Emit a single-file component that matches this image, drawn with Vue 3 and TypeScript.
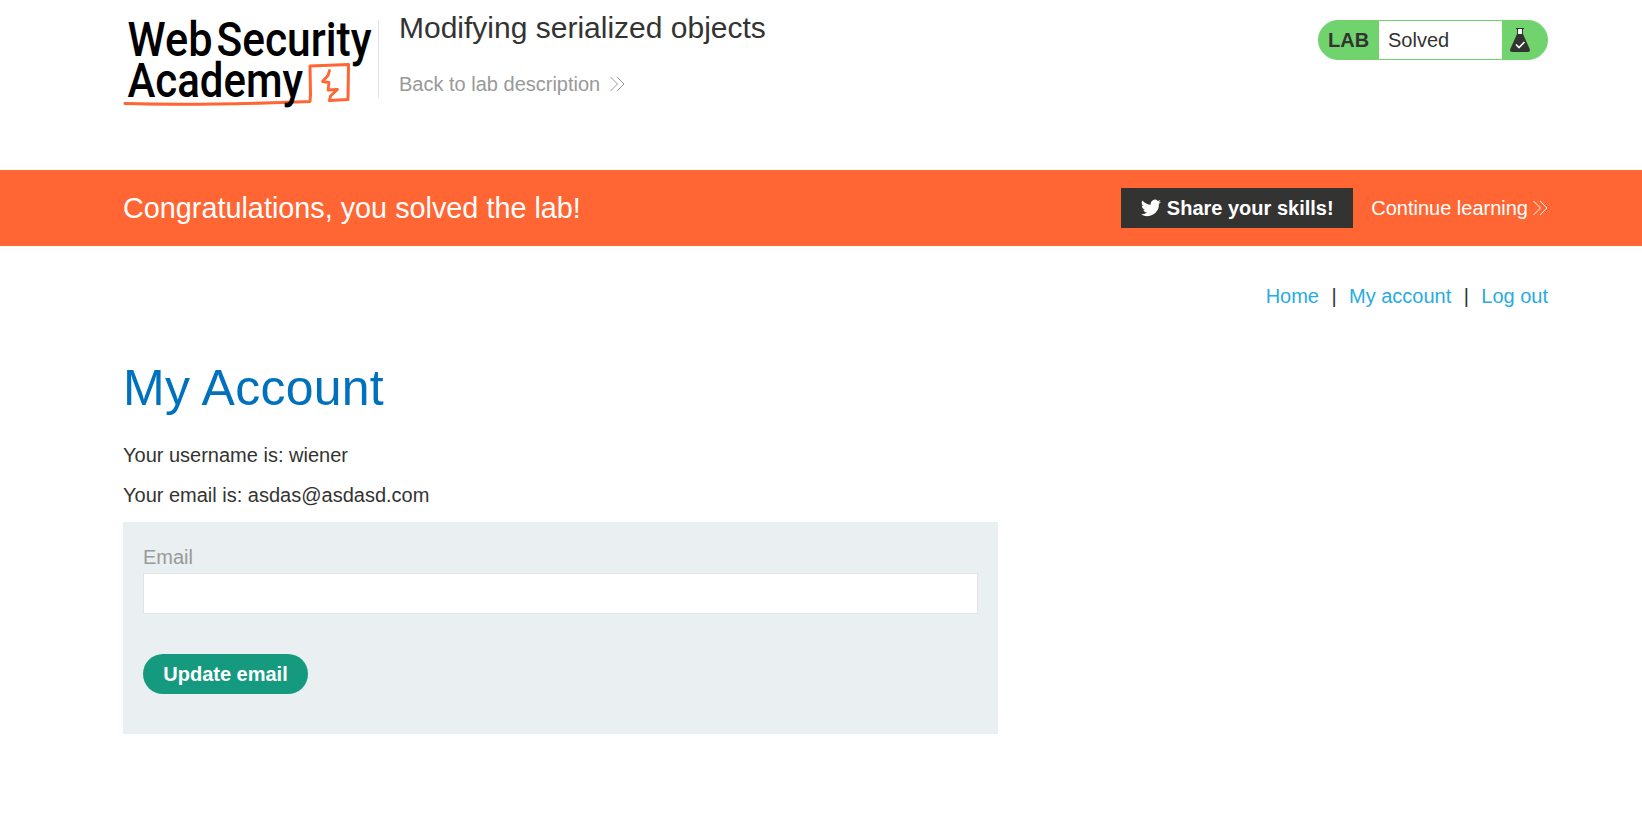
<script setup lang="ts">
import { ref } from 'vue'

const username = 'wiener'
const currentEmail = 'asdas@asdasd.com'
const email = ref('')
const links = ['Home', 'My account', 'Log out']
</script>

<template>
  <div class="page">
    <header class="header wrap">
      <svg class="logo" width="255" height="112" viewBox="0 0 255 112">
        <g fill="none" stroke="#ff6633" stroke-linecap="round" stroke-linejoin="round">
          <path d="M2 103.500 C60 105 120 104 187 101.500 L187.500 95 L187 66 L225.500 64.500 L225 99.500 L206.500 100.500" stroke-width="3" />
          <path d="M2 103.500 C50 105.500 110 104 155 103" stroke-width="1.800" />
          <path d="M206.500 70.500 L205 75.500 L199.500 81.500 L206 82.500 L205 90 L214.500 89.500 L207.500 96 L206.500 100.500" stroke-width="2.800" />
        </g>
        <g class="wordmark">
          <text x="4.500" y="55.700" textLength="85" lengthAdjust="spacingAndGlyphs">Web</text>
          <text x="93.500" y="55.700" textLength="155" lengthAdjust="spacingAndGlyphs">Security</text>
          <text x="4.500" y="97" textLength="175.500" lengthAdjust="spacingAndGlyphs">Academy</text>
        </g>
      </svg>
      <div class="divider"></div>
      <div class="heading">
        <h2>Modifying serialized objects</h2>
        <a class="back">
          Back to lab description
          <svg class="chevrons" width="15" height="16" viewBox="0 0 15 16">
            <path d="M.5 1 L7.500 8 L.5 15 M7 1 L14 8 L7 15" />
          </svg>
        </a>
      </div>
      <div class="status">
        <strong>LAB</strong>
        <span class="state">Solved</span>
        <svg class="flask" width="20" height="26" viewBox="0 0 20 26">
          <path d="M6 1.500 H14 M7.500 1 V8 M12.500 1 V8" fill="none" stroke="#333332" stroke-width="1" />
          <rect x="8" y="2" width="4" height="5.500" fill="#fff" />
          <path d="M7 7 H13 L19.700 22 Q20.500 25 18 25 H2 Q-.5 25 .3 22 Z" fill="#333332" />
          <path d="M6 17.500 L9 20.500 L14.500 15" fill="none" stroke="#fff" stroke-width="1.600" />
        </svg>
      </div>
    </header>

    <section class="banner">
      <div class="wrap banner-row">
        <p class="congrats">Congratulations, you solved the lab!</p>
        <button class="share" type="button">
          <svg width="20" height="18" viewBox="0 0 24 20">
            <path fill="#fff" d="M24 2.400a9.800 9.800 0 0 1-2.800.8A4.900 4.900 0 0 0 23.300.5a9.900 9.900 0 0 1-3.100 1.200 4.900 4.900 0 0 0-8.400 4.500A14 14 0 0 1 1.700 1a4.900 4.900 0 0 0 1.500 6.600 4.900 4.900 0 0 1-2.200-.6 4.900 4.900 0 0 0 4 4.900 5 5 0 0 1-2.200.1 4.900 4.900 0 0 0 4.600 3.400A9.900 9.900 0 0 1 0 17.400a14 14 0 0 0 21.500-12.400A10 10 0 0 0 24 2.400z" />
          </svg>
          Share your skills!
        </button>
        <a class="continue">
          Continue learning
          <svg class="chevrons" width="15" height="16" viewBox="0 0 15 16">
            <path d="M.5 1 L7.500 8 L.5 15 M7 1 L14 8 L7 15" />
          </svg>
        </a>
      </div>
    </section>

    <main class="wrap">
      <nav class="links">
        <template v-for="(link, i) in links" :key="link">
          <span v-if="i > 0" class="bar">|</span>
          <a>{{ link }}</a>
        </template>
      </nav>
      <h1>My Account</h1>
      <p class="info">Your username is: {{ username }}</p>
      <p class="info">Your email is: {{ currentEmail }}</p>
      <form class="form" @submit.prevent>
        <label for="email">Email</label>
        <input id="email" v-model="email" type="email" />
        <button type="submit">Update email</button>
      </form>
    </main>
  </div>
</template>

<style>
body {
  background: #fff;
}
</style>

<style scoped>
.page {
  min-height: 818px;
  font: 20px/20px "Liberation Sans", Arial, sans-serif;
  color: #333332;
}
.wrap {
  box-sizing: border-box;
  width: 1425px;
  margin-left: 123px;
}
h1, h2, p {
  margin: 0;
  font-weight: 400;
}
.header {
  display: flex;
  align-items: flex-start;
  height: 170px;
}
.logo {
  overflow: visible;
}
.wordmark {
  font-family: Roboto, sans-serif;
  font-size: 48px;
  font-weight: 500;
  fill: #000;
}
.divider {
  width: 1px;
  height: 78px;
  margin-top: 20px;
  background: #e3e3e3;
}
.heading {
  margin-left: 20px;
  padding-top: 8px;
}
h2 {
  font-size: 30px;
  line-height: 40px;
}
.back {
  display: flex;
  align-items: center;
  gap: 10px;
  margin-top: 26px;
  color: #999;
}
.chevrons {
  fill: none;
  stroke: currentColor;
  stroke-width: 1;
}
.status {
  display: flex;
  align-items: center;
  box-sizing: border-box;
  width: 230px;
  height: 40px;
  margin: 20px 0 0 auto;
  border: 1px solid #70d36d;
  border-radius: 20px;
  overflow: hidden;
  background: #70d36d;
}
.status strong {
  width: 51px;
  padding-left: 9px;
}
.state {
  box-sizing: border-box;
  width: 123px;
  line-height: 38px;
  padding-left: 9px;
  background: #fff;
}
.flask {
  margin-left: 8px;
}
.banner {
  height: 76px;
  background: #ff6633;
  color: #fff;
}
.banner-row {
  display: flex;
  align-items: center;
  height: 76px;
}
.congrats {
  margin-right: auto;
  font-size: 28.8px;
  line-height: 40px;
}
.share {
  display: flex;
  align-items: center;
  justify-content: center;
  gap: 6px;
  width: 232px;
  height: 40px;
  padding: 0;
  border: 0;
  background: #333332;
  color: #fff;
  font: bold 20px/20px "Liberation Sans", Arial, sans-serif;
}
.continue {
  display: flex;
  align-items: center;
  gap: 5px;
  margin-left: 18px;
}
.links {
  display: flex;
  justify-content: flex-end;
  padding-top: 40px;
  color: #29abe2;
}
.bar {
  width: 30px;
  text-align: center;
  color: #333332;
}
h1 {
  margin-top: 52px;
  color: #0071bc;
  font-size: 50px;
  letter-spacing: 0.25px;
  line-height: 60px;
}
.info {
  margin-top: 27px;
}
.info + .info {
  margin-top: 20px;
}
.form {
  display: flex;
  flex-direction: column;
  align-items: flex-start;
  box-sizing: border-box;
  width: 875px;
  height: 212px;
  margin-top: 17px;
  padding: 25px 20px 0;
  background: #eaeff2;
}
label {
  color: #999;
}
input {
  box-sizing: border-box;
  width: 835px;
  height: 41px;
  margin-top: 6px;
  padding: 0 10px;
  border: 1px solid #e3e3e3;
  background: #fff;
  font: inherit;
}
.form button {
  width: 165px;
  height: 40px;
  margin-top: 40px;
  padding: 0;
  border: 0;
  border-radius: 20px;
  background: #159a80;
  color: #fff;
  font: bold 20px/20px "Liberation Sans", Arial, sans-serif;
}
</style>
